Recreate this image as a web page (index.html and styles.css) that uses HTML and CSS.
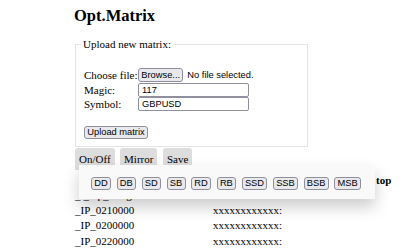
FILE: index.html
```html
<!DOCTYPE html>
<html>
<head>
<meta charset="utf-8">
<title>Opt.Matrix</title>
<link rel="stylesheet" href="styles.css">
</head>
<body>
<div class="page">
  <h1 class="title">Opt.Matrix</h1>
  <fieldset class="upload">
    <legend class="legend">Upload new matrix:</legend>
    <div class="form-grid">
      <span class="lbl">Choose file:</span>
      <span class="file"><button class="ctl">Browse...</button><span class="file-note">No file selected.</span></span>
      <span class="lbl">Magic:</span>
      <input class="field" type="text" value="117">
      <span class="lbl">Symbol:</span>
      <input class="field" type="text" value="GBPUSD">
    </div>
    <button class="ctl upload-btn">Upload matrix</button>
  </fieldset>
  <div class="tabs-wrap">
    <div class="tabs">
      <button class="tab">On/Off</button>
      <button class="tab">Mirror</button>
      <button class="tab">Save</button>
    </div>
    <div class="dropdown">
      <button class="ctl mini">DD</button>
      <button class="ctl mini">DB</button>
      <button class="ctl mini">SD</button>
      <button class="ctl mini">SB</button>
      <button class="ctl mini">RD</button>
      <button class="ctl mini">RB</button>
      <button class="ctl mini">SSD</button>
      <button class="ctl mini">SSB</button>
      <button class="ctl mini">BSB</button>
      <button class="ctl mini">MSB</button>
    </div>
  </div>
  <table class="matrix">
    <colgroup><col class="c1"><col class="c2"><col class="c3"></colgroup>
    <tr><th></th><th></th><th>top</th></tr>
    <tr><td>_t_top_Range</td><td>xxxxxxxxxxxx:</td><td></td></tr>
    <tr><td>_IP_0210000</td><td>xxxxxxxxxxxx:</td><td></td></tr>
    <tr><td>_IP_0200000</td><td>xxxxxxxxxxxx:</td><td></td></tr>
    <tr><td>_IP_0220000</td><td>xxxxxxxxxxxx:</td><td></td></tr>
  </table>
</div>
</body>
</html>
```
FILE: styles.css
```css
html, body {
  margin: 0;
  padding: 0;
  background: #fff;
}
body {
  font-family: "Liberation Serif", "Times New Roman", serif;
  font-size: 11px;
  color: #000;
}
.page {
  padding: 6px 0 0 75px;
}
.title {
  margin: 0 0 0 -1px;
  font-size: 16.5px;
  line-height: 19px;
  font-weight: bold;
}
.upload {
  box-sizing: border-box;
  width: 233px;
  min-width: 0;
  margin: 13px 0 0 0;
  padding: 17px 8px 7px 8px;
  border: 1px solid #e4e4e4;
}
.legend {
  margin-left: -3px;
  padding: 0 2px;
  line-height: 13px;
}
.form-grid {
  display: grid;
  grid-template-columns: 54px auto;
  grid-template-rows: 15px 14px 14px;
  align-items: start;
}
.lbl {
  line-height: 14px;
  white-space: nowrap;
}
.file {
  display: flex;
  align-items: center;
  height: 14px;
}
.file-note {
  font-family: "Liberation Sans", Arial, sans-serif;
  font-size: 9.3px;
  margin-left: 4px;
  white-space: nowrap;
}
.ctl {
  font-family: "Liberation Sans", Arial, sans-serif;
  font-size: 9.3px;
  color: #000;
  background: #e9e9ed;
  border: 1px solid #8f8f9d;
  border-radius: 3px;
  margin: 0;
  padding: 0 2.3px;
  height: 14px;
  line-height: 12px;
  white-space: nowrap;
}
.field {
  box-sizing: border-box;
  width: 111px;
  height: 14px;
  margin: 0;
  padding: 0 3px;
  border: 1px solid #8f8f9d;
  border-radius: 2px;
  font-family: "Liberation Sans", Arial, sans-serif;
  font-size: 9.3px;
  color: #000;
  background: #fff;
}
.upload-btn {
  display: block;
  margin-top: 15px;
  height: 13px;
  line-height: 11px;
}
.tabs-wrap {
  position: relative;
  margin: 1px 0 3px 0;
}
.tabs {
  display: flex;
  gap: 5.5px;
}
.tab {
  font-family: "Liberation Serif", "Times New Roman", serif;
  font-size: 11px;
  line-height: 13px;
  color: #000;
  background: #ddd;
  border: none;
  border-radius: 3px 3px 0 0;
  margin: 0;
  padding: 4.5px 4px 4px 4px;
}
.dropdown {
  position: absolute;
  top: 17px;
  left: 4px;
  z-index: 2;
  box-sizing: border-box;
  width: 296px;
  height: 34px;
  padding: 12px 0 0 12px;
  display: flex;
  align-items: flex-start;
  gap: 5.5px;
  background: #f9f9f9;
  box-shadow: 0 8px 16px 0 rgba(0, 0, 0, 0.2);
}
.mini {
  height: 13px;
  line-height: 11px;
}
.matrix {
  border-collapse: collapse;
  table-layout: fixed;
  width: 341px;
}
.c1 { width: 138px; }
.c2 { width: 163px; }
.c3 { width: 40px; }
.matrix th,
.matrix td {
  padding: 0;
  font-size: 11px;
  line-height: 15.25px;
  white-space: nowrap;
  text-align: left;
}
.matrix th {
  font-weight: bold;
}
```
